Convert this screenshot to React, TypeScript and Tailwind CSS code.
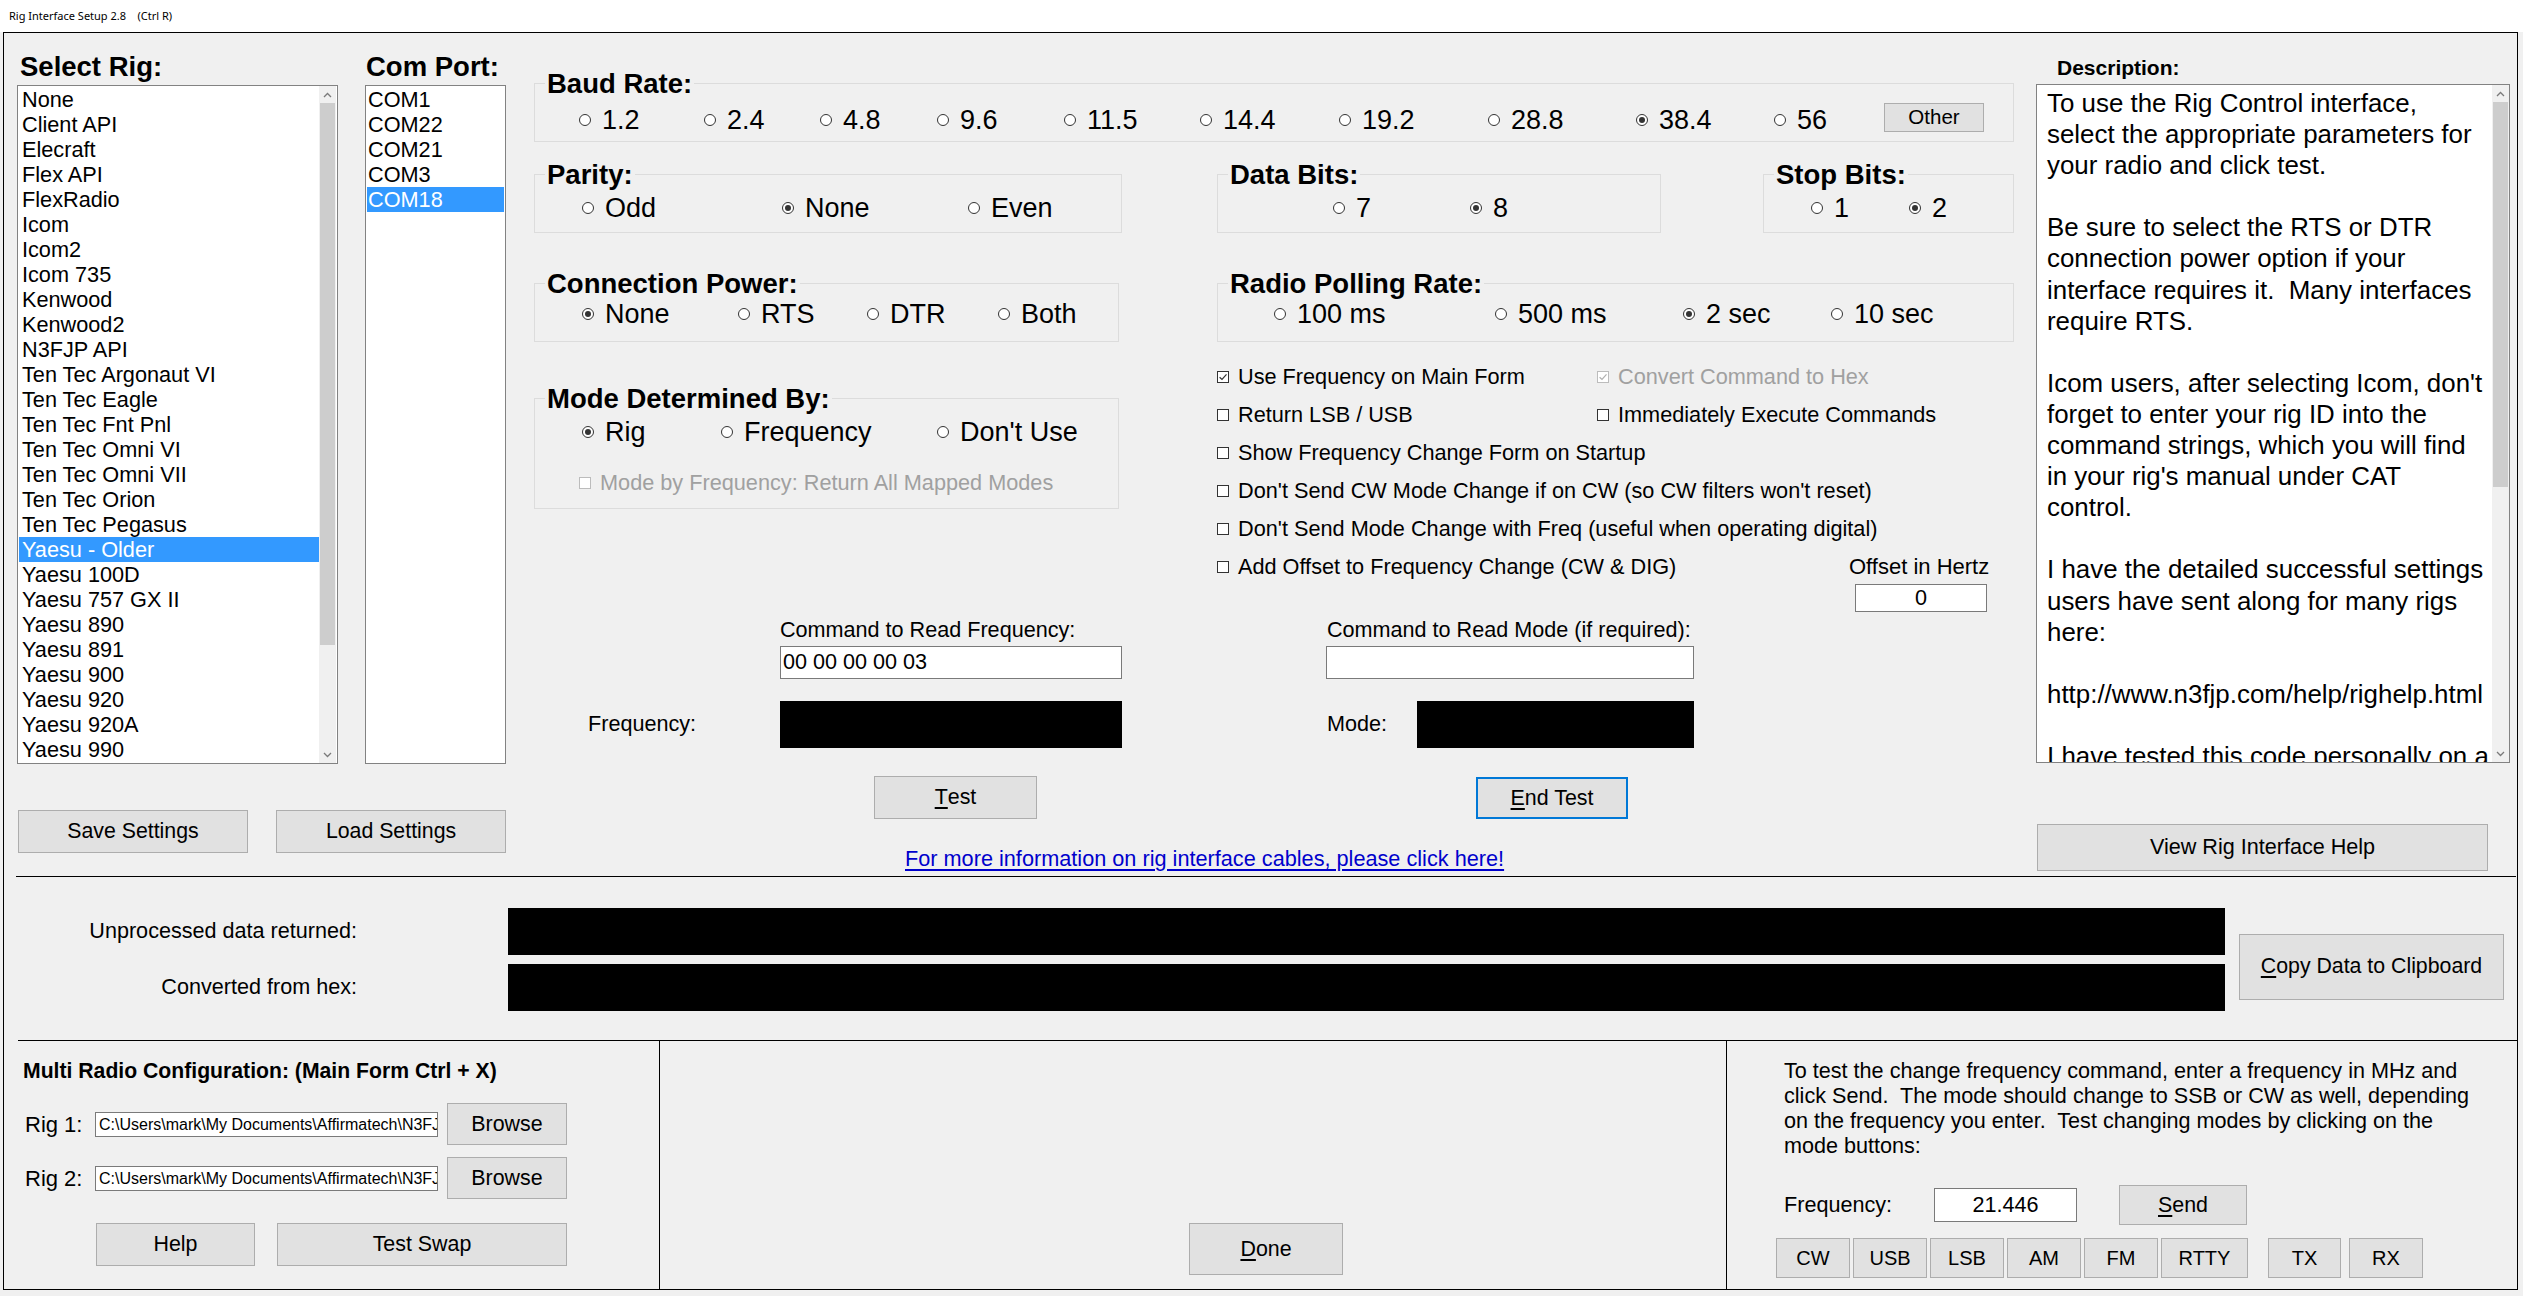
import React from 'react';

const rigs = [
  'None', 'Client API', 'Elecraft', 'Flex API', 'FlexRadio', 'Icom', 'Icom2', 'Icom 735', 'Kenwood', 'Kenwood2',
  'N3FJP API', 'Ten Tec Argonaut VI', 'Ten Tec Eagle', 'Ten Tec Fnt Pnl', 'Ten Tec Omni VI', 'Ten Tec Omni VII',
  'Ten Tec Orion', 'Ten Tec Pegasus', 'Yaesu - Older', 'Yaesu 100D', 'Yaesu 757 GX II', 'Yaesu 890', 'Yaesu 891',
  'Yaesu 900', 'Yaesu 920', 'Yaesu 920A', 'Yaesu 990',
];
const ports = ['COM1', 'COM22', 'COM21', 'COM3', 'COM18'];

const bauds = [
  { label: '1.2', w: 'w-[125px]' },
  { label: '2.4', w: 'w-[116px]' },
  { label: '4.8', w: 'w-[117px]' },
  { label: '9.6', w: 'w-[127px]' },
  { label: '11.5', w: 'w-[136px]' },
  { label: '14.4', w: 'w-[139px]' },
  { label: '19.2', w: 'w-[149px]' },
  { label: '28.8', w: 'w-[148px]' },
  { label: '38.4', w: 'w-[138px]', checked: true },
  { label: '56', w: 'w-[110px]' },
];

const description = [
  'To use the Rig Control interface,',
  'select the appropriate parameters for',
  'your radio and click test.',
  '',
  'Be sure to select the RTS or DTR',
  'connection power option if your',
  'interface requires it.  Many interfaces',
  'require RTS.',
  '',
  "Icom users, after selecting Icom, don't",
  'forget to enter your rig ID into the',
  'command strings, which you will find',
  "in your rig's manual under CAT",
  'control.',
  '',
  'I have the detailed successful settings',
  'users have sent along for many rigs',
  'here:',
  '',
  'http://www.n3fjp.com/help/righelp.html',
  '',
  'I have tested this code personally on a',
];

const freqHelp = [
  'To test the change frequency command, enter a frequency in MHz and',
  'click Send.  The mode should change to SSB or CW as well, depending',
  'on the frequency you enter.  Test changing modes by clicking on the',
  'mode buttons:',
];

const modeButtons = [
  { label: 'CW', cls: 'w-[74px]' },
  { label: 'USB', cls: 'w-[74px] ml-[3px]' },
  { label: 'LSB', cls: 'w-[74px] ml-[3px]' },
  { label: 'AM', cls: 'w-[74px] ml-[3px]' },
  { label: 'FM', cls: 'w-[74px] ml-[3px]' },
  { label: 'RTTY', cls: 'w-[87px] ml-[3px]' },
  { label: 'TX', cls: 'w-[73px] ml-[20px]' },
  { label: 'RX', cls: 'w-[74px] ml-[8px]' },
];

const Radio = ({ label, checked, w }: { label: string; checked?: boolean; w?: string }) => (
  <div className={`flex items-center h-[30px] shrink-0 ${w ?? ''}`}>
    <span className="w-[12px] h-[12px] rounded-full border border-[#333333] bg-white flex items-center justify-center shrink-0">
      {checked && <span className="w-[6px] h-[6px] rounded-full bg-[#333333]" />}
    </span>
    <span className="ml-[11px] text-[27px] leading-[30px] whitespace-nowrap">{label}</span>
  </div>
);

const Check = ({ label, checked, disabled, w }: { label: string; checked?: boolean; disabled?: boolean; w?: string }) => (
  <div className={`flex items-center h-[30px] shrink-0 ${w ?? ''}`}>
    <span
      className={`w-[12px] h-[12px] border bg-white flex items-center justify-center shrink-0 ${
        disabled ? 'border-[#bcbcbc]' : 'border-[#333333]'
      }`}
    >
      {checked && (
        <svg width="10" height="10" viewBox="0 0 10 10">
          <path d="M1.6 5.2 L4 7.5 L8.5 2.3" fill="none" stroke={disabled ? '#b0b0b0' : '#333333'} strokeWidth="1.2" />
        </svg>
      )}
    </span>
    <span className={`ml-[9px] text-[21.7px] leading-[24px] whitespace-nowrap ${disabled ? 'text-[#a0a0a0]' : 'text-black'}`}>
      {label}
    </span>
  </div>
);

const Group = ({ title, className, children }: { title: string; className: string; children: React.ReactNode }) => (
  <div className={`relative border border-[#dcdcdc] shrink-0 ${className}`}>
    <span className="absolute left-[10px] top-[-15px] px-[2px] bg-[#f0f0f0] text-[27.5px] leading-[30px] font-bold whitespace-nowrap">
      {title}
    </span>
    {children}
  </div>
);

const Btn = ({ children, className, focus }: { children: React.ReactNode; className: string; focus?: boolean }) => (
  <button
    type="button"
    className={`flex items-center justify-center shrink-0 bg-[#e1e1e1] text-black whitespace-nowrap ${
      focus ? 'border-2 border-[#0078d7]' : 'border border-[#adadad]'
    } ${className}`}
  >
    {children}
  </button>
);

const Chevron = ({ up }: { up?: boolean }) => (
  <svg width="9" height="6" viewBox="0 0 9 6">
    <path d={up ? 'M1 5 L4.5 1.5 L8 5' : 'M1 1 L4.5 4.5 L8 1'} fill="none" stroke="#7a7a7a" strokeWidth="1.3" />
  </svg>
);

const VScroll = ({ thumb }: { thumb: string }) => (
  <div className="w-[17px] h-full bg-[#f0f0f0] flex flex-col shrink-0">
    <div className="h-[17px] flex items-center justify-center shrink-0">
      <Chevron up />
    </div>
    <div className="flex-1">
      <div className={`mx-[1px] bg-[#cdcdcd] ${thumb}`} />
    </div>
    <div className="h-[17px] flex items-center justify-center shrink-0">
      <Chevron />
    </div>
  </div>
);

const BlackBox = ({ className }: { className: string }) => <div className={`bg-black shrink-0 ${className}`} />;

export default function App() {
  return (
    <div className="w-[2523px] h-[1296px] bg-[#f0f0f0] text-black font-['Liberation_Sans',Arial,sans-serif] overflow-hidden">
      {/* title bar */}
      <div className="h-[32px] bg-white flex items-center pl-[9px] text-[11px] font-['Noto_Sans',sans-serif] whitespace-pre">
        Rig Interface Setup 2.8    (Ctrl R)
      </div>

      <div className="ml-[3px] w-[2515px] h-[1258px] border border-black flex flex-col">
        {/* top section */}
        <div className="h-[843px] flex pl-[13px] shrink-0">
          {/* rig / port lists */}
          <div className="w-[490px] flex flex-col shrink-0">
            <div className="mt-[17px] h-[34px] flex text-[27.5px] leading-[34px] font-bold">
              <div className="w-[348px] pl-[3px]">Select Rig:</div>
              <div className="pl-[1px]">Com Port:</div>
            </div>
            <div className="mt-[1px] flex">
              <div className="w-[321px] h-[679px] border border-[#828282] bg-white flex">
                <div className="flex-1 pt-[1px] pl-[1px] overflow-hidden">
                  {rigs.map((r) => (
                    <div
                      key={r}
                      className={`h-[25px] leading-[25px] pl-[3px] text-[21.7px] whitespace-nowrap ${
                        r === 'Yaesu - Older' ? 'bg-[#3399ff] text-white' : ''
                      }`}
                    >
                      {r}
                    </div>
                  ))}
                </div>
                <div className="pr-[1px] h-full">
                  <VScroll thumb="h-[542px]" />
                </div>
              </div>
              <div className="ml-[27px] w-[141px] h-[679px] border border-[#828282] bg-white pt-[1px] pl-[1px] pr-[1px]">
                {ports.map((p) => (
                  <div
                    key={p}
                    className={`h-[25px] leading-[25px] pl-[1px] text-[21.7px] ${p === 'COM18' ? 'bg-[#3399ff] text-white' : ''}`}
                  >
                    {p}
                  </div>
                ))}
              </div>
            </div>
            <div className="mt-[46px] flex text-[21.3px]">
              <Btn className="ml-[1px] w-[230px] h-[43px]">Save Settings</Btn>
              <Btn className="ml-[28px] w-[230px] h-[43px]">Load Settings</Btn>
            </div>
          </div>

          {/* settings */}
          <div className="ml-[27px] w-[1480px] flex flex-col shrink-0">
            <Group title="Baud Rate:" className="mt-[50px] w-[1480px] h-[59px]">
              <div className="pt-[21px] pl-[44px] flex">
                {bauds.map((b) => (
                  <Radio key={b.label} label={b.label} checked={b.checked} w={b.w} />
                ))}
                <Btn className="-mt-[2px] w-[100px] h-[29px] text-[20.5px]">Other</Btn>
              </div>
            </Group>

            <div className="flex">
              {/* left sub column */}
              <div className="w-[588px] flex flex-col shrink-0">
                <Group title="Parity:" className="mt-[32px] w-[588px] h-[59px]">
                  <div className="pt-[18px] pl-[47px] flex">
                    <Radio label="Odd" w="w-[200px]" />
                    <Radio label="None" checked w="w-[186px]" />
                    <Radio label="Even" />
                  </div>
                </Group>
                <Group title="Connection Power:" className="mt-[50px] w-[585px] h-[59px]">
                  <div className="pt-[15px] pl-[47px] flex">
                    <Radio label="None" checked w="w-[156px]" />
                    <Radio label="RTS" w="w-[129px]" />
                    <Radio label="DTR" w="w-[131px]" />
                    <Radio label="Both" />
                  </div>
                </Group>
                <Group title="Mode Determined By:" className="mt-[56px] w-[585px] h-[111px]">
                  <div className="pt-[18px] pl-[47px] flex">
                    <Radio label="Rig" checked w="w-[139px]" />
                    <Radio label="Frequency" w="w-[216px]" />
                    <Radio label="Don't Use" />
                  </div>
                  <div className="mt-[21px] pl-[44px]">
                    <Check label="Mode by Frequency: Return All Mapped Modes" disabled />
                  </div>
                </Group>
                <div className="mt-[109px] ml-[246px] h-[24px] text-[21.6px] leading-[24px] whitespace-nowrap">
                  Command to Read Frequency:
                </div>
                <div className="mt-[4px] ml-[246px] w-[342px] h-[33px] bg-white border border-[#7a7a7a] flex items-center pl-[2px] text-[21.6px]">
                  00 00 00 00 03
                </div>
                <div className="mt-[22px] h-[47px] flex items-center">
                  <div className="ml-[54px] w-[192px] text-[21.6px]">Frequency:</div>
                  <BlackBox className="w-[342px] h-[47px]" />
                </div>
                <Btn className="mt-[28px] ml-[340px] w-[163px] h-[43px] text-[21.4px]">
                  <span className="underline underline-offset-[3px]">T</span>est
                </Btn>
              </div>

              {/* right sub column */}
              <div className="ml-[95px] w-[797px] flex flex-col shrink-0">
                <div className="mt-[32px] flex">
                  <Group title="Data Bits:" className="w-[444px] h-[59px]">
                    <div className="pt-[18px] pl-[115px] flex">
                      <Radio label="7" w="w-[137px]" />
                      <Radio label="8" checked />
                    </div>
                  </Group>
                  <Group title="Stop Bits:" className="ml-[102px] w-[251px] h-[59px]">
                    <div className="pt-[18px] pl-[47px] flex">
                      <Radio label="1" w="w-[98px]" />
                      <Radio label="2" checked />
                    </div>
                  </Group>
                </div>
                <Group title="Radio Polling Rate:" className="mt-[50px] w-[797px] h-[59px]">
                  <div className="pt-[15px] pl-[56px] flex">
                    <Radio label="100 ms" w="w-[221px]" />
                    <Radio label="500 ms" w="w-[188px]" />
                    <Radio label="2 sec" checked w="w-[148px]" />
                    <Radio label="10 sec" />
                  </div>
                </Group>
                <div className="mt-[20px] flex flex-col gap-[8px]">
                  <div className="flex">
                    <Check label="Use Frequency on Main Form" checked w="w-[380px]" />
                    <Check label="Convert Command to Hex" checked disabled />
                  </div>
                  <div className="flex">
                    <Check label="Return LSB / USB" w="w-[380px]" />
                    <Check label="Immediately Execute Commands" />
                  </div>
                  <Check label="Show Frequency Change Form on Startup" />
                  <Check label="Don't Send CW Mode Change if on CW (so CW filters won't reset)" />
                  <Check label="Don't Send Mode Change with Freq (useful when operating digital)" />
                  <div className="flex items-center">
                    <Check label="Add Offset to Frequency Change (CW & DIG)" w="w-[632px]" />
                    <span className="text-[22px] leading-[24px] whitespace-nowrap">Offset in Hertz</span>
                  </div>
                </div>
                <div className="mt-[2px] ml-[638px] w-[132px] h-[28px] bg-white border border-[#7a7a7a] flex items-center justify-center text-[21.6px]">
                  0
                </div>
                <div className="mt-[6px] ml-[110px] h-[24px] text-[21.6px] leading-[24px] whitespace-nowrap">
                  Command to Read Mode (if required):
                </div>
                <div className="mt-[4px] ml-[109px] w-[368px] h-[33px] bg-white border border-[#7a7a7a]" />
                <div className="mt-[22px] h-[47px] flex items-center">
                  <div className="ml-[110px] w-[90px] text-[21.6px]">Mode:</div>
                  <BlackBox className="w-[277px] h-[47px]" />
                </div>
                <Btn focus className="mt-[29px] ml-[259px] w-[152px] h-[42px] text-[21.4px]">
                  <span className="underline underline-offset-[3px]">E</span>nd Test
                </Btn>
              </div>
            </div>

            <div className="mt-[28px] ml-[371px] h-[24px] text-[21.7px] leading-[24px] text-[#0000cc] underline underline-offset-[3px] whitespace-nowrap">
              For more information on rig interface cables, please click here!
            </div>
          </div>

          {/* description */}
          <div className="ml-[22px] w-[474px] flex flex-col shrink-0">
            <div className="mt-[23px] ml-[21px] h-[24px] text-[21px] leading-[24px] font-bold">Description:</div>
            <div className="mt-[4px] w-[474px] h-[679px] border border-[#828282] bg-white flex">
              <div className="flex-1 pt-[3px] pl-[10px] overflow-hidden text-[25.9px] leading-[31.1px] whitespace-pre">
                {description.map((line, i) => (
                  <div key={i} className="h-[31.1px]">
                    {line}
                  </div>
                ))}
              </div>
              <VScroll thumb="h-[385px]" />
            </div>
            <Btn className="mt-[61px] ml-[1px] w-[451px] h-[47px] text-[21.6px]">View Rig Interface Help</Btn>
          </div>
        </div>

        <div className="ml-[12px] w-[2500px] h-[1px] bg-black shrink-0" />

        {/* raw data section */}
        <div className="h-[163px] flex shrink-0">
          <div className="flex flex-col">
            <div className="mt-[31px] flex items-center">
              <div className="w-[353px] text-right text-[21.6px]">Unprocessed data returned:</div>
              <BlackBox className="ml-[151px] w-[1717px] h-[47px]" />
            </div>
            <div className="mt-[9px] flex items-center">
              <div className="w-[353px] text-right text-[21.6px]">Converted from hex:</div>
              <BlackBox className="ml-[151px] w-[1717px] h-[47px]" />
            </div>
          </div>
          <Btn className="self-start mt-[57px] ml-[14px] w-[265px] h-[66px] text-[21.3px]">
            <span className="underline underline-offset-[3px]">C</span>opy Data to Clipboard
          </Btn>
        </div>

        <div className="ml-[14px] w-[2499px] h-[1px] bg-black shrink-0" />

        {/* bottom section */}
        <div className="h-[248px] flex shrink-0">
          <div className="w-[655px] flex flex-col shrink-0">
            <div className="mt-[18px] ml-[19px] h-[24px] text-[21.2px] leading-[24px] font-bold whitespace-nowrap">
              Multi Radio Configuration: (Main Form Ctrl + X)
            </div>
            {['Rig 1:', 'Rig 2:'].map((rig, i) => (
              <div key={rig} className={`${i === 0 ? 'mt-[20px]' : 'mt-[12px]'} h-[42px] flex items-center`}>
                <div className="ml-[21px] w-[70px] text-[22px]">{rig}</div>
                <div className="w-[343px] h-[25px] bg-white border border-[#7a7a7a] overflow-hidden whitespace-nowrap text-[16px] leading-[23px] pl-[3px]">
                  C:\Users\mark\My Documents\Affirmatech\N3FJP
                </div>
                <Btn className="ml-[9px] w-[120px] h-[42px] text-[21.4px]">Browse</Btn>
              </div>
            ))}
            <div className="mt-[24px] flex">
              <Btn className="ml-[92px] w-[159px] h-[43px] text-[21.4px]">Help</Btn>
              <Btn className="ml-[22px] w-[290px] h-[43px] text-[21.4px]">Test Swap</Btn>
            </div>
          </div>
          <div className="w-[1px] bg-black shrink-0" />
          <div className="w-[1066px] flex flex-col shrink-0">
            <Btn className="mt-[182px] ml-[529px] w-[154px] h-[52px] text-[21.4px]">
              <span className="underline underline-offset-[3px]">D</span>one
            </Btn>
          </div>
          <div className="w-[1px] bg-black shrink-0" />
          <div className="flex-1 flex flex-col">
            <div className="mt-[17px] ml-[57px] text-[21.6px] leading-[25px] whitespace-pre">
              {freqHelp.map((l) => (
                <div key={l}>{l}</div>
              ))}
            </div>
            <div className="mt-[27px] h-[40px] flex items-center">
              <div className="ml-[57px] w-[150px] text-[21.6px]">Frequency:</div>
              <div className="w-[143px] h-[34px] bg-white border border-[#7a7a7a] flex items-center justify-center text-[21.6px]">
                21.446
              </div>
              <Btn className="ml-[42px] w-[128px] h-[40px] text-[21.4px]">
                <span className="underline underline-offset-[3px]">S</span>end
              </Btn>
            </div>
            <div className="mt-[13px] ml-[49px] flex">
              {modeButtons.map((m) => (
                <Btn key={m.label} className={`h-[40px] text-[20px] ${m.cls}`}>
                  {m.label}
                </Btn>
              ))}
            </div>
          </div>
        </div>
      </div>
    </div>
  );
}
